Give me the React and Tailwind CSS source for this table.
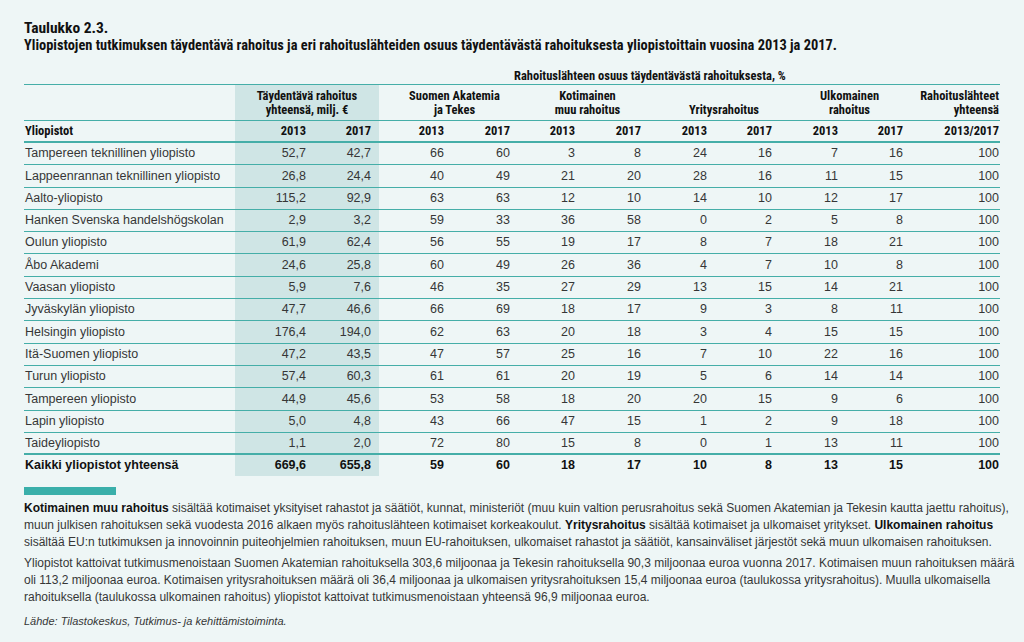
const COLS =
  "grid grid-cols-[211px_79px_65px_73px_66px_65px_66px_66px_65px_66px_65px_89px]";

const ROWS = [
  ["Tampereen teknillinen yliopisto", "52,7", "42,7", 66, 60, 3, 8, 24, 16, 7, 16, 100],
  ["Lappeenrannan teknillinen yliopisto", "26,8", "24,4", 40, 49, 21, 20, 28, 16, 11, 15, 100],
  ["Aalto-yliopisto", "115,2", "92,9", 63, 63, 12, 10, 14, 10, 12, 17, 100],
  ["Hanken Svenska handelshögskolan", "2,9", "3,2", 59, 33, 36, 58, 0, 2, 5, 8, 100],
  ["Oulun yliopisto", "61,9", "62,4", 56, 55, 19, 17, 8, 7, 18, 21, 100],
  ["Åbo Akademi", "24,6", "25,8", 60, 49, 26, 36, 4, 7, 10, 8, 100],
  ["Vaasan yliopisto", "5,9", "7,6", 46, 35, 27, 29, 13, 15, 14, 21, 100],
  ["Jyväskylän yliopisto", "47,7", "46,6", 66, 69, 18, 17, 9, 3, 8, 11, 100],
  ["Helsingin yliopisto", "176,4", "194,0", 62, 63, 20, 18, 3, 4, 15, 15, 100],
  ["Itä-Suomen yliopisto", "47,2", "43,5", 47, 57, 25, 16, 7, 10, 22, 16, 100],
  ["Turun yliopisto", "57,4", "60,3", 61, 61, 20, 19, 5, 6, 14, 14, 100],
  ["Tampereen yliopisto", "44,9", "45,6", 53, 58, 18, 20, 20, 15, 9, 6, 100],
  ["Lapin yliopisto", "5,0", "4,8", 43, 66, 47, 15, 1, 2, 9, 18, 100],
  ["Taideyliopisto", "1,1", "2,0", 72, 80, 15, 8, 0, 1, 13, 11, 100],
];

const TOTAL = ["Kaikki yliopistot yhteensä", "669,6", "655,8", 59, 60, 18, 17, 10, 8, 13, 15, 100];

// condensed bold headings (Roboto at 75% width)
const cond = "font-['Roboto',sans-serif] [font-stretch:75%] font-bold";

function Cells({ row }) {
  return row.map((v, i) => {
    if (i === 0) {
      return (
        <div key={i} className="flex items-center pl-px">
          {v}
        </div>
      );
    }
    const shaded = i === 1 || i === 2 ? "bg-[#cfe5e5]" : "";
    const pad = i === 11 ? "pr-px" : "pr-2";
    return (
      <div key={i} className={`flex items-center justify-end ${pad} ${shaded}`}>
        {v}
      </div>
    );
  });
}

export default function App() {
  return (
    <div className="w-[1024px] h-[642px] bg-[#eef6f6] px-6 pt-[19px] text-[#363636] overflow-hidden font-['Liberation_Sans',Arial,sans-serif]">
      <div className={`${cond} text-[#111] leading-[18px]`}>
        <div className="text-[15.5px]">Taulukko 2.3.</div>
        <div className="text-[14.4px]">
          Yliopistojen tutkimuksen täydentävä rahoitus ja eri rahoituslähteiden osuus täydentävästä rahoituksesta yliopistoittain vuosina 2013 ja 2017.
        </div>
      </div>

      <div className="w-[976px] mt-[12px]">
        <div className={`${cond} text-[12.5px] text-[#111] h-[17px] pl-[490px] leading-[17px]`}>
          Rahoituslähteen osuus täydentävästä rahoituksesta, %
        </div>

        <div
          className={`${COLS} ${cond} text-[12.5px] leading-[14px] text-[#111] h-[37px] border-t border-b border-[#45aea8]`}
        >
          <div />
          <div className="col-span-2 bg-[#cfe5e5] flex flex-col items-center justify-center text-center">
            <span>Täydentävä rahoitus</span>
            <span>yhteensä, milj. €</span>
          </div>
          <div className="col-span-2 flex flex-col items-center justify-center text-center pl-3">
            <span>Suomen Akatemia</span>
            <span>ja Tekes</span>
          </div>
          <div className="col-span-2 flex flex-col items-center justify-center text-center pl-2">
            <span>Kotimainen</span>
            <span>muu rahoitus</span>
          </div>
          <div className="col-span-2 flex flex-col items-center justify-center text-center pl-[19px]">
            <span>&nbsp;</span>
            <span>Yritysrahoitus</span>
          </div>
          <div className="col-span-2 flex flex-col items-center justify-center text-center pl-2">
            <span>Ulkomainen</span>
            <span>rahoitus</span>
          </div>
          <div className="flex flex-col items-end justify-center text-right pr-px">
            <span>Rahoituslähteet</span>
            <span>yhteensä</span>
          </div>
        </div>

        <div className={`${COLS} ${cond} text-[12.5px] text-[#111] h-[22px] border-b-2 border-[#45aea8]`}>
          <Cells row={["Yliopistot", "2013", "2017", "2013", "2017", "2013", "2017", "2013", "2017", "2013", "2017", "2013/2017"]} />
        </div>

        {ROWS.map((r, idx) => (
          <div
            key={idx}
            className={`${COLS} text-[12.5px] h-[22.3px] border-[#45aea8] ${idx === ROWS.length - 1 ? "border-b-2" : "border-b"}`}
          >
            <Cells row={r} />
          </div>
        ))}

        <div className={`${COLS} text-[12.5px] font-bold text-[#111] h-[21px]`}>
          <Cells row={TOTAL} />
        </div>
      </div>

      <div className="w-[92px] h-[8px] bg-[#3aafaa] mt-[11px]" />

      <div className="text-[12px] leading-[17px] text-[#363636] mt-[5px] w-[990px] whitespace-nowrap">
        <p>
          <b className="text-[#111]">Kotimainen muu rahoitus</b> sisältää kotimaiset yksityiset rahastot ja säätiöt, kunnat, ministeriöt (muu kuin valtion perusrahoitus sekä Suomen Akatemian ja Tekesin kautta jaettu rahoitus),
          <br />
          muun julkisen rahoituksen sekä vuodesta 2016 alkaen myös rahoituslähteen kotimaiset korkeakoulut. <b className="text-[#111]">Yritysrahoitus</b> sisältää kotimaiset ja ulkomaiset yritykset. <b className="text-[#111]">Ulkomainen rahoitus</b>
          <br />
          sisältää EU:n tutkimuksen ja innovoinnin puiteohjelmien rahoituksen, muun EU-rahoituksen, ulkomaiset rahastot ja säätiöt, kansainväliset järjestöt sekä muun ulkomaisen rahoituksen.
        </p>
        <p className="mt-[4px]">
          Yliopistot kattoivat tutkimusmenoistaan Suomen Akatemian rahoituksella 303,6 miljoonaa ja Tekesin rahoituksella 90,3 miljoonaa euroa vuonna 2017. Kotimaisen muun rahoituksen määrä
          <br />
          oli 113,2 miljoonaa euroa. Kotimaisen yritysrahoituksen määrä oli 36,4 miljoonaa ja ulkomaisen yritysrahoituksen 15,4 miljoonaa euroa (taulukossa yritysrahoitus). Muulla ulkomaisella
          <br />
          rahoituksella (taulukossa ulkomainen rahoitus) yliopistot kattoivat tutkimusmenoistaan yhteensä 96,9 miljoonaa euroa.
        </p>
        <p className="mt-[7px] italic text-[11px]">Lähde: Tilastokeskus, Tutkimus- ja kehittämistoiminta.</p>
      </div>
    </div>
  );
}
